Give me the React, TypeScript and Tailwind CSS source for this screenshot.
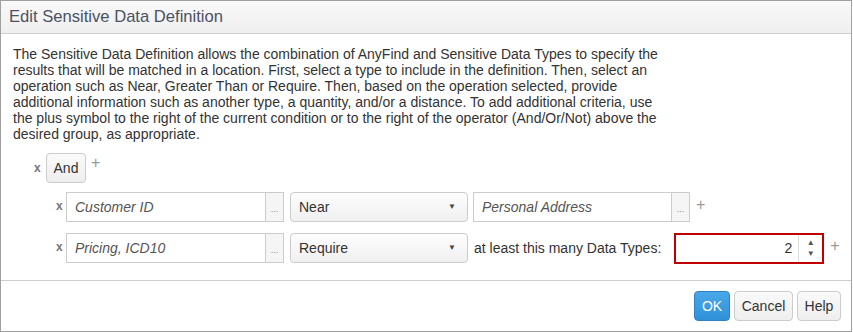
import React from "react";

function XMark() {
  return <span className="text-[12px] font-bold text-[#777] leading-none select-none">x</span>;
}

function Plus() {
  return <span className="text-[16px] text-[#999] leading-none select-none">+</span>;
}

function TypeInput({ value, width }: { value: string; width: string }) {
  return (
    <div className={`flex h-[30px] ${width}`}>
      <div className="flex-1 flex items-center border border-[#ccc] bg-white pl-[8px] text-[14px] italic text-[#555]">
        {value}
      </div>
      <div className="w-[18px] border border-l-0 border-[#ccc] bg-[#f5f5f5] flex items-end justify-center pb-[7px] text-[9px] text-[#888] leading-none">
        ...
      </div>
    </div>
  );
}

function Select({ value }: { value: string }) {
  return (
    <div className="w-[178px] h-[30px] border border-[#ccc] rounded-[4px] bg-gradient-to-b from-[#fdfdfd] to-[#f0f0f0] flex items-center justify-between pl-[8px] pr-[11px] text-[14px] text-[#333]">
      <span>{value}</span>
      <span className="text-[8px] text-[#444] leading-none">▼</span>
    </div>
  );
}

export default function App() {
  return (
    <div className="w-[853px] h-[332px] bg-white font-['Liberation_Sans',Arial,sans-serif]">
      <div className="w-[852px] h-[332px] border border-[#a0a0a0] flex flex-col">
        <div className="h-[33px] border-b border-[#cfcfcf] bg-gradient-to-b from-[#f9f9f9] to-[#efefef] flex items-center pl-[8px] text-[16.6px] text-[#4b5263]">
          Edit Sensitive Data Definition
        </div>
        <div className="flex-1 pl-[12px] pt-[12px]">
          <p className="text-[14px] leading-[16px] text-[#333] w-[700px] whitespace-nowrap">
            The Sensitive Data Definition allows the combination of AnyFind and Sensitive Data Types to specify the<br />
            results that will be matched in a location. First, select a type to include in the definition. Then, select an<br />
            operation such as Near, Greater Than or Require. Then, based on the operation selected, provide<br />
            additional information such as another type, a quantity, and/or a distance. To add additional criteria, use<br />
            the plus symbol to the right of the current condition or to the right of the operator (And/Or/Not) above the<br />
            desired group, as appropriate.
          </p>
          <div className="flex items-center h-[30px] mt-[11px] ml-[21px] leading-none">
            <div className="w-[12px] -mt-[2px] leading-none"><XMark /></div>
            <div className="w-[40px] h-[30px] border border-[#ccc] rounded-[4px] bg-gradient-to-b from-[#fafafa] to-[#eeeeee] flex items-center justify-center text-[14px] text-[#333]">
              And
            </div>
            <div className="ml-[5px] -mt-[10px] leading-none"><Plus /></div>
          </div>
          <div className="flex flex-col gap-[11px] mt-[9px] ml-[43px]">
            <div className="flex items-center h-[30px]">
              <div className="w-[10px] -mt-[4px] leading-none"><XMark /></div>
              <TypeInput value="Customer ID" width="w-[218px]" />
              <div className="ml-[6px]"><Select value="Near" /></div>
              <div className="ml-[5px]"><TypeInput value="Personal Address" width="w-[217px]" /></div>
              <div className="ml-[6px] -mt-[4px] leading-none"><Plus /></div>
            </div>
            <div className="flex items-center h-[30px]">
              <div className="w-[10px] -mt-[4px] leading-none"><XMark /></div>
              <TypeInput value="Pricing, ICD10" width="w-[218px]" />
              <div className="ml-[6px]"><Select value="Require" /></div>
              <span className="ml-[6px] text-[14px] text-[#333]">at least this many Data Types:</span>
              <div className="ml-[13px] w-[150px] h-[31px] border-2 border-[#c00000] bg-white flex">
                <div className="flex-1 flex items-center justify-end pr-[6px] text-[14px] text-[#333]">2</div>
                <div className="w-[24px] border-l border-[#ddd] flex flex-col items-center justify-center gap-[1px] text-[8px] text-[#555] leading-[10px]">
                  <span>▲</span>
                  <span>▼</span>
                </div>
              </div>
              <div className="ml-[6px] -mt-[4px] leading-none"><Plus /></div>
            </div>
          </div>
        </div>
        <div className="h-[51px] border-t border-[#cfcfcf] flex items-center justify-end gap-[4px] pr-[10px]">
          <button className="h-[30px] w-[36px] rounded-[4px] border border-[#2d82c4] bg-gradient-to-b from-[#49a8e8] to-[#2f91d8] text-white text-[14px]">
            OK
          </button>
          <button className="h-[30px] w-[59px] rounded-[4px] border border-[#ccc] bg-gradient-to-b from-[#fafafa] to-[#eeeeee] text-[#333] text-[14px]">
            Cancel
          </button>
          <button className="h-[30px] w-[44px] rounded-[4px] border border-[#ccc] bg-gradient-to-b from-[#fafafa] to-[#eeeeee] text-[#333] text-[14px]">
            Help
          </button>
        </div>
      </div>
    </div>
  );
}
